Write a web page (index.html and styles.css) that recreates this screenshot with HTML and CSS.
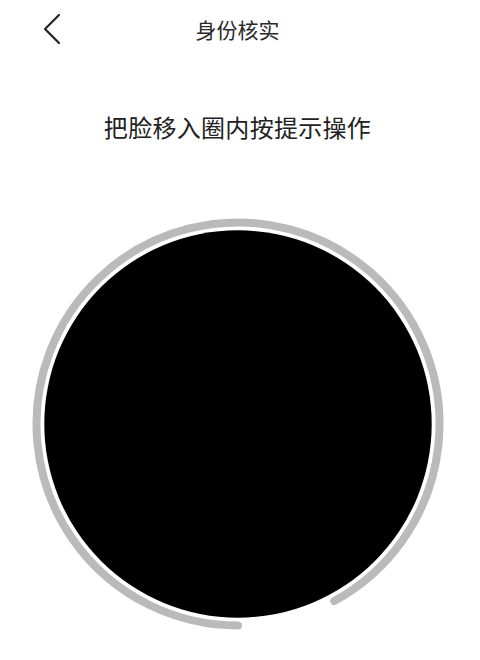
FILE: index.html
```html
<!DOCTYPE html>
<html lang="zh-CN">
<head>
<meta charset="utf-8">
<link rel="stylesheet" href="styles.css">
</head>
<body>
<div class="page">
  <header class="nav">
    <button class="back" aria-label="返回">
      <svg width="20" height="32" viewBox="0 0 20 32"><path d="M16 2 L2 16 L16 30" fill="none" stroke="#222" stroke-width="2.2" stroke-linecap="round" stroke-linejoin="round"/></svg>
    </button>
    <h1 class="title">身份核实</h1>
    <span class="spacer"></span>
  </header>
  <p class="hint">把脸移入圈内按提示操作</p>
  <div class="camera">
    <svg width="420" height="420" viewBox="0 0 420 420">
      <circle cx="210" cy="210" r="193.7" fill="#000"/>
      <path d="M210 411.5 A201.5 201.5 0 1 1 306.3 387" fill="none" stroke="#bababa" stroke-width="8" stroke-linecap="round"/>
    </svg>
  </div>
</div>
</body>
</html>
```

FILE: styles.css
```css
html, body {
  margin: 0;
  padding: 0;
  background: #fff;
}
body {
  font-family: "Noto Sans CJK SC", "Noto Sans", sans-serif;
  color: #222;
}
.page {
  width: 475px;
  display: flex;
  flex-direction: column;
  align-items: center;
}
.nav {
  width: 100%;
  height: 58px;
  display: grid;
  grid-template-columns: 80px 1fr 80px;
  align-items: center;
}
.back {
  border: 0;
  background: none;
  padding: 0;
  margin-left: 43px;
  width: 20px;
  height: 32px;
  display: flex;
  cursor: pointer;
}
.title {
  margin: 0;
  text-align: center;
  font-size: 21px;
  font-weight: 400;
  color: #2a2a2a;
  line-height: 58px;
}
.hint {
  margin: 53px 0 0;
  font-size: 24px;
  line-height: 32px;
  color: #222;
  letter-spacing: 0.3px;
}
.camera {
  margin-top: 71px;
  width: 420px;
  height: 420px;
}
.camera svg {
  display: block;
}
```
